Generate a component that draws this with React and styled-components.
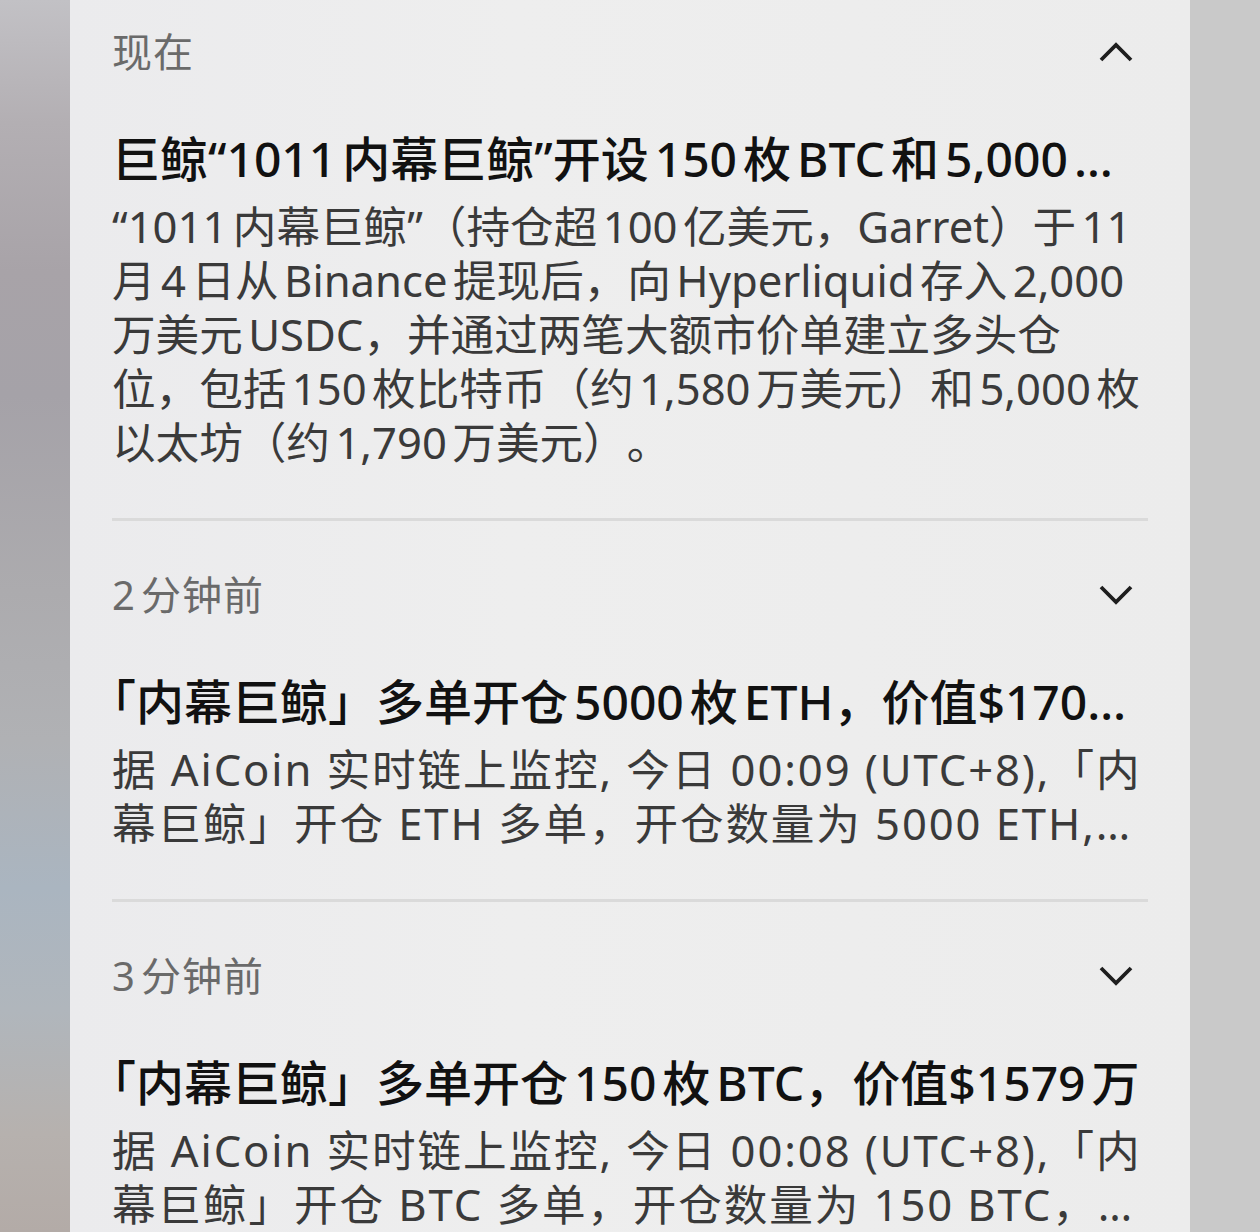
import React from "react";
import styled, { createGlobalStyle } from "styled-components";

const Global = createGlobalStyle`
  html, body { margin: 0; padding: 0; background: #c9c9c9; }
  body {
    font-family: "Noto Sans", "Noto Sans CJK SC", sans-serif;
    text-autospace: normal;
  }
  * { box-sizing: border-box; }
`;

const Screen = styled.div`
  display: flex;
  width: 1260px;
  height: 1232px;
  overflow: hidden;
`;

const LeftBackdrop = styled.div`
  width: 70px;
  flex: none;
  background: linear-gradient(
    to bottom,
    #c2c1c5 0%,
    #b3afb3 10%,
    #a8a3a8 22%,
    #a5a2a8 32%,
    #acabae 48%,
    #b0b1b4 60%,
    #aab5c0 72%,
    #b0b6bc 82%,
    #b6b1ae 92%,
    #b3aba7 100%
  );
`;

const RightBackdrop = styled.div`
  width: 70px;
  flex: none;
  background: #c9c9c9;
`;

const Panel = styled.div`
  flex: 1;
  min-width: 0;
  padding: 0 42px;
  background: linear-gradient(to right, #ebebed 0%, #eeeeee 40%, #ececec 100%);
`;

const Item = styled.section`
  padding: 46px 0 49px;
  border-bottom: 3px solid #dadada;
  &:first-child { padding-top: 24px; }
`;

const Header = styled.div`
  display: flex;
  align-items: center;
  justify-content: space-between;
  height: 56px;
  padding-right: 15px;
`;

const Time = styled.span`
  font-size: 40px;
  line-height: 56px;
  color: #6a6a6a;
  letter-spacing: 1px;
`;

const Chevron = styled.svg`
  width: 34px;
  height: 20px;
  display: block;
`;

const Title = styled.h2`
  margin: 49px 0 0;
  font-size: 48px;
  line-height: 60px;
  font-weight: 500;
  color: #111111;
  white-space: nowrap;
  overflow: hidden;
  text-overflow: ellipsis;
  text-spacing-trim: trim-start;
`;

const Body = styled.p`
  margin: 10px 0 0;
  font-size: 43.6px;
  line-height: 54px;
  color: #3a3a3a;
  text-spacing-trim: space-all;
  ${(p) =>
    p.$clamp
      ? `
    letter-spacing: 1.9px;
    display: -webkit-box;
    -webkit-box-orient: vertical;
    -webkit-line-clamp: ${p.$clamp};
    overflow: hidden;
  `
      : ""}
`;

const ChevronIcon = ({ up }) => (
  <Chevron viewBox="0 0 34 20" fill="none">
    <path
      d={up ? "M2 18 L17 3 L32 18" : "M2 2 L17 17 L32 2"}
      stroke="#1e1e1e"
      strokeWidth="3.8"
      strokeLinecap="butt"
      strokeLinejoin="miter"
    />
  </Chevron>
);

const items = [
  {
    time: "现在",
    expanded: true,
    title: "巨鲸“1011内幕巨鲸”开设150枚BTC和5,000枚ETH多单",
    body:
      "“1011内幕巨鲸”（持仓超100亿美元，Garret）于11月4日从Binance提现后，向Hyperliquid存入2,000万美元USDC，并通过两笔大额市价单建立多头仓位，包括150枚比特币（约1,580万美元）和5,000枚以太坊（约1,790万美元）。",
  },
  {
    time: "2分钟前",
    expanded: false,
    title: "「内幕巨鲸」多单开仓5000枚ETH，价值$1700万",
    body:
      "据 AiCoin 实时链上监控, 今日 00:09 (UTC+8),「内幕巨鲸」开仓 ETH 多单，开仓数量为 5000 ETH, 开仓均价约 3,400 USDT，价值约 $1700 万。",
  },
  {
    time: "3分钟前",
    expanded: false,
    title: "「内幕巨鲸」多单开仓150枚BTC，价值$1579万",
    body:
      "据 AiCoin 实时链上监控, 今日 00:08 (UTC+8),「内幕巨鲸」开仓 BTC 多单，开仓数量为 150 BTC， 开仓均价约 105,300 USDT，价值约 $1579 万。",
  },
];

export default function App() {
  return (
    <>
      <Global />
      <Screen>
        <LeftBackdrop />
        <Panel>
          {items.map((it) => (
            <Item key={it.time}>
              <Header>
                <Time>{it.time}</Time>
                <ChevronIcon up={it.expanded} />
              </Header>
              <Title>{it.title}</Title>
              <Body $clamp={it.expanded ? 0 : 2}>{it.body}</Body>
            </Item>
          ))}
        </Panel>
        <RightBackdrop />
      </Screen>
    </>
  );
}
